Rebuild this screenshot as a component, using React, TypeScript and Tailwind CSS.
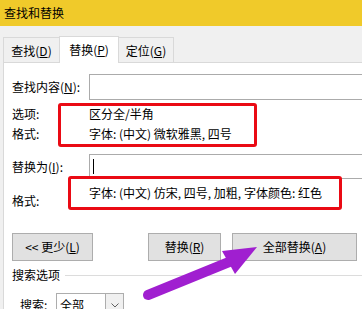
export default function App() {
  return (
    <div className="relative w-[362px] h-[309px] overflow-hidden bg-[#f0f0f0] text-[12px] leading-[20px] text-black font-['Noto_Sans_CJK_SC',sans-serif]">
      {/* title bar */}
      <div className="h-[26px] bg-[#f0ca2a] px-[4px] flex items-center">查找和替换</div>

      {/* tabs */}
      <div className="flex items-end pl-[3px] pt-[9px] h-[36px]">
        <div className="w-[56px] h-[25px] border-t border-l border-[#d9d9d9] bg-[#f0f0f0] flex items-center justify-center pt-[1px]">
          查找(<span className="underline">D</span>)
        </div>
        <div className="w-[60px] h-[27px] border-t border-l border-r border-[#d9d9d9] bg-white flex items-center justify-center -mb-px relative z-10">
          替换(<span className="underline">P</span>)
        </div>
        <div className="w-[55px] h-[25px] border-t border-r border-[#d9d9d9] bg-[#f0f0f0] flex items-center justify-center pt-[1px]">
          定位(<span className="underline">G</span>)
        </div>
      </div>

      {/* panel */}
      <div className="ml-[3px] h-[260px] bg-white border-t border-l border-[#d9d9d9] pl-[8px] pt-[11px] flex flex-col">
        <div className="flex items-center h-[26px]">
          <div className="w-[77px]">查找内容(<span className="underline">N</span>):</div>
          <div className="flex-1 h-[26px] border border-[#ababab] -mr-[10px]"></div>
        </div>

        <div className="flex mt-[4px] h-[20px]">
          <div className="w-[77px]">选项:</div>
          <div>区分全/半角</div>
        </div>
        <div className="flex h-[20px]">
          <div className="w-[77px]">格式:</div>
          <div>字体: (中文) 微软雅黑, 四号</div>
        </div>

        <div className="flex items-center mt-[10px] h-[25px]">
          <div className="w-[77px]">替换为(<span className="underline">I</span>):</div>
          <div className="flex-1 h-[25px] border border-[#ababab] -mr-[10px] flex items-center pl-[3px]">
            <div className="w-px h-[15px] bg-black"></div>
          </div>
        </div>

        <div className="flex items-start h-[32px]">
          <div className="w-[77px] mt-[12px]">格式:</div>
          <div className="mt-[4px]">字体: (中文) 仿宋, 四号, 加粗, 字体颜色: 红色</div>
        </div>

        <div className="flex mt-[22px] h-[28px]">
          <button className="w-[81px] h-[28px] bg-[#e1e1e1] border border-[#adadad]">
            &lt;&lt; 更少(<span className="underline">L</span>)
          </button>
          <button className="w-[73px] h-[28px] ml-[55px] bg-[#e1e1e1] border border-[#adadad]">
            替换(<span className="underline">R</span>)
          </button>
          <button className="w-[125px] h-[28px] ml-[11px] bg-[#e1e1e1] border border-[#adadad]">
            全部替换(<span className="underline">A</span>)
          </button>
        </div>

        <div className="flex items-center mt-[4px] h-[20px]">
          <div>搜索选项</div>
          <div className="flex-1 h-px bg-[#dcdcdc] ml-[5px]"></div>
        </div>

        <div className="flex items-center mt-[8px] ml-[8px]">
          <div className="w-[36px]">搜索:</div>
          <div className="flex h-[24px] w-[68px] border border-[#adadad]">
            <div className="flex-1 pl-[3px] leading-[22px]">全部</div>
            <div className="w-[18px] border-l border-[#adadad] bg-[#f0f0f0] flex items-center justify-center">
              <svg width="8" height="5" viewBox="0 0 8 5">
                <path d="M0.5 0.5 L4 4 L7.5 0.5" fill="none" stroke="#606060" strokeWidth="1" />
              </svg>
            </div>
          </div>
        </div>
      </div>

      {/* annotations */}
      <div className="absolute left-[58px] top-[103px] w-[199px] h-[44px] border-[3px] border-[#ea0a14] rounded-[3px]"></div>
      <div className="absolute left-[68px] top-[176px] w-[274px] h-[34px] border-[3px] border-[#ea0a14] rounded-[3px]"></div>
      <svg className="absolute left-0 top-0 pointer-events-none" width="362" height="309" viewBox="0 0 362 309">
        <line x1="148" y1="295" x2="234" y2="260" stroke="#a01fd0" strokeWidth="10" strokeLinecap="round" />
        <polygon points="222,251 257,247 235,274" fill="#a01fd0" />
      </svg>
    </div>
  );
}
